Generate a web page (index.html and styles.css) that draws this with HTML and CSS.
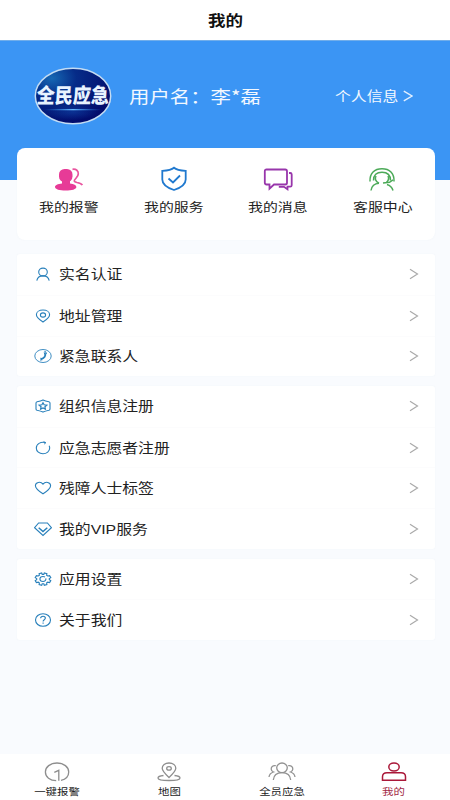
FILE: index.html
```html
<!DOCTYPE html>
<html lang="zh-CN">
<head>
<meta charset="utf-8">
<title>我的</title>
<link rel="stylesheet" href="styles.css">
</head>
<body>
<header class="titlebar"><span class="wide">我的</span></header>
<section class="profile">
  <div class="user">
    <div class="logo">
      <svg class="logo-bg" width="78" height="58" viewBox="0 0 78 58">
        <defs>
          <radialGradient id="navy" cx="22%" cy="18%" r="85%"><stop offset="0" stop-color="#1668b4"/><stop offset=".38" stop-color="#062c88"/><stop offset="1" stop-color="#020c6c"/></radialGradient>
          <linearGradient id="beam"><stop offset="0" stop-color="#2b86e8" stop-opacity="0"/><stop offset=".5" stop-color="#66b8ff"/><stop offset="1" stop-color="#2b86e8" stop-opacity="0"/></linearGradient>
          <radialGradient id="glow"><stop offset="0" stop-color="#1c70d8"/><stop offset="1" stop-color="#1c70d8" stop-opacity="0"/></radialGradient>
        </defs>
        <ellipse cx="39" cy="29" rx="37.700" ry="27.800" fill="url(#navy)" stroke="#c3dcf3" stroke-width="1.500"/>
        <ellipse cx="39" cy="45" rx="26" ry="8" fill="url(#glow)" opacity=".3"/>
        <rect x="10" y="42" width="58" height="1.300" fill="url(#beam)"/>
      </svg>
      <span class="logo-text">全民应急</span>
    </div>
    <span class="name">用户名：李*磊</span>
    <span class="info">个人信息</span>
    <svg class="info-arrow" width="10" height="12" viewBox="0 0 10 12"><path d="M.8 1.2 9 6 .8 10.8"/></svg>
  </div>
</section>
<main>
  <nav class="card quick">
    <a><svg width="30" height="26" viewBox="0 0 30 26"><g fill="#e73b97"><rect x="5" y="3" width="13.500" height="13" rx="5.500"/><path d="M8 11h8v6.500c4 .3 6.400 1.600 6.400 3.400 0 2.200-4.500 3.600-10.700 3.600S1 23.100 1 20.900c0-1.800 2.700-3.300 7-3.500Z"/></g><path d="M18.500 3.300c3.700-.5 6 1.400 5.800 4.600-.1 3-2.700 4.300-3.800 6.300-.7 1.300.3 1.800 2.500 2.300 2.700.5 4.600 1.200 5.300 2.700" stroke="#e9559f" stroke-width="1.700"/></svg><span class="wide">我的报警</span></a>
    <a><svg width="30" height="26" viewBox="0 0 30 26"><g stroke="#2079cf" stroke-width="1.800"><path d="M15 1.700C12 4.300 8.500 4.500 3.300 4.800v8.700c0 5.500 5 8.300 11.700 10.500 6.700-2.200 11.700-5 11.700-10.500V4.800C21.500 4.500 18 4.300 15 1.700Z"/><path d="m9.500 12.500 4.500 4 7-7"/></g></svg><span class="wide">我的服务</span></a>
    <a><svg width="30" height="26" viewBox="0 0 30 26"><g stroke="#9836ab" stroke-width="1.800"><path d="M3.500 3.500h18.700c1.300 0 1.800.7 1.800 1.700v11.600c0 1-.6 1.700-1.800 1.700H11l-4.500 4.200v-4.200h-3c-1 0-1.700-.7-1.700-1.700V5.200c0-1 .7-1.700 1.700-1.700Z"/><path d="M26 7h1.200c.9 0 1.500.6 1.500 1.500v10.700c0 1-.6 1.500-1.500 1.500h-2.700v2.500l-3.500-2.400h-5.200"/></g></svg><span class="wide">我的消息</span></a>
    <a><svg width="30" height="26" viewBox="0 0 30 26"><g stroke="#4caa58" stroke-width="1.500"><path d="M3 15.500C2.600 7.200 7.500 2.800 15 2.800S27.400 7.200 27 15.500M6.500 14.500C6.500 9 9.500 6.200 15 6.200s8.500 2.800 8.500 8.300"/><path d="M12 17.200c-3.400-1.800-4.300-4.700-3-7.200M21 10c1.100 2.200.6 4.500-1.500 6.300M16 17l6.500-.7 3.500-2.500M4 24.500c.7-4.500 3.900-6.900 8-7.200M20 18.500c3.200 1 5.200 3.200 6 6"/></g></svg><span class="wide">客服中心</span></a>
  </nav>

  <div class="card list">
    <a class="row"><svg class="icon" width="18" height="16" viewBox="0 0 18 16"><ellipse cx="9" cy="6" rx="4.300" ry="3.900"/><path d="M2.800 14.600c.6-3.200 2.800-4.700 6.200-4.700s5.600 1.500 6.200 4.700"/></svg><span class="wide">实名认证</span><svg class="arrow" width="10" height="12" viewBox="0 0 10 12"><path d="M1 1.200 8.500 6 1 10.800"/></svg></a>
    <a class="row"><svg class="icon" width="18" height="16" viewBox="0 0 18 16"><path d="M9 14C5 11.400 2.400 9.200 2.400 6.700 2.400 4 5.200 2 9 2s6.600 2 6.600 4.700C15.600 9.200 13 11.400 9 14Z"/><ellipse cx="9" cy="7" rx="2.600" ry="2.100"/></svg><span class="wide">地址管理</span><svg class="arrow" width="10" height="12" viewBox="0 0 10 12"><path d="M1 1.200 8.500 6 1 10.800"/></svg></a>
    <a class="row"><svg class="icon" width="18" height="16" viewBox="0 0 18 16"><ellipse cx="9" cy="8" rx="8.200" ry="6.500" stroke-width=".9"/><path d="M10.600 4.800c1.700 2.700 0 5.700-4 6.400" stroke-width="1.700"/><path d="m9.800 4.200 1.800-.6.900 2.200-1.700.6M6.500 10.200l1.700 1.500-2 .5" stroke-width="1"/></svg><span class="wide">紧急联系人</span><svg class="arrow" width="10" height="12" viewBox="0 0 10 12"><path d="M1 1.200 8.500 6 1 10.800"/></svg></a>
  </div>

  <div class="card list">
    <a class="row"><svg class="icon" width="18" height="16" viewBox="0 0 18 16"><path d="M9 1.900c2 1 4 1.500 5.900 1.900.8.200 1.100.6 1.100 1.300v5.800c0 .7-.3 1.100-1.100 1.300-1.900.4-3.900.9-5.900 1.900-2-1-4-1.500-5.900-1.900-.8-.2-1.100-.6-1.100-1.300V5.100c0-.7.3-1.100 1.100-1.300C5 3.400 7 2.900 9 1.900Z"/><path d="m9 4.800 1.100 2 2.700.3-1.900 1.600.5 2.400L9 10l-2.400 1.100.5-2.400-1.900-1.600 2.700-.3Z" stroke-width="1.200"/></svg><span class="wide">组织信息注册</span><svg class="arrow" width="10" height="12" viewBox="0 0 10 12"><path d="M1 1.200 8.500 6 1 10.800"/></svg></a>
    <a class="row"><svg class="icon" width="18" height="16" viewBox="0 0 18 16"><path d="M11.500 2.600C6.500 1.500 2.300 4 2.300 8c0 3.400 3 5.800 6.700 5.800s6.700-2.500 6.700-5.800c0-.8-.2-1.600-.6-2.300"/><path d="m9.500 1.600 2.500 1.100-2 1.500" stroke-width=".8"/></svg><span class="wide">应急志愿者注册</span><svg class="arrow" width="10" height="12" viewBox="0 0 10 12"><path d="M1 1.200 8.500 6 1 10.800"/></svg></a>
    <a class="row"><svg class="icon" width="18" height="16" viewBox="0 0 18 16"><path d="M9 13.800C5.300 11.400 1.400 8.900 1.400 5.700 1.400 2.200 6.500 1 9 4.100 11.500 1 16.600 2.200 16.600 5.700c0 3.200-3.900 5.700-7.600 8.100Z"/></svg><span class="wide">残障人士标签</span><svg class="arrow" width="10" height="12" viewBox="0 0 10 12"><path d="M1 1.200 8.500 6 1 10.800"/></svg></a>
    <a class="row"><svg class="icon" width="18" height="16" viewBox="0 0 18 16"><path d="M4.600 2h8.800l4 4.700L9 14.400.6 6.700Z"/><path d="m4.700 6.800 4.300 3.700 4.300-3.700" stroke-width="1.500"/></svg><span class="wide">我的<span class="latin">VIP</span>服务</span><svg class="arrow" width="10" height="12" viewBox="0 0 10 12"><path d="M1 1.200 8.500 6 1 10.800"/></svg></a>
  </div>

  <div class="card list">
    <a class="row"><svg class="icon" width="18" height="16" viewBox="0 0 18 16"><path d="m7.700 1.900.5 1.500h1.600l.5-1.500 2.600.8-.3 1.500 1.100.8 1.900-.4 1.200 2-1.500 1v1l1.500 1-1.200 2-1.900-.4-1.100.8.300 1.500-2.600.8-.5-1.500H8.200l-.5 1.500-2.600-.8.300-1.500-1.100-.8-1.900.4-1.200-2 1.500-1v-1l-1.500-1 1.200-2 1.900.4 1.100-.8-.3-1.500Z"/><path d="M11.800 7.300c.5 2-1 3.200-2.800 3.200s-3.100-1-3.100-2.500S7.200 5.500 9 5.500c.8 0 1.500.2 2 .5"/></svg><span class="wide">应用设置</span><svg class="arrow" width="10" height="12" viewBox="0 0 10 12"><path d="M1 1.200 8.500 6 1 10.800"/></svg></a>
    <a class="row"><svg class="icon" width="18" height="16" viewBox="0 0 18 16"><ellipse cx="9" cy="8" rx="7.500" ry="6.300"/><path d="M6.600 6.300C6.700 3.700 11.400 3.700 11.400 6.100c0 1.500-2.300 1.700-2.300 3.300M9.100 10.500v1.200"/></svg><span class="wide">关于我们</span><svg class="arrow" width="10" height="12" viewBox="0 0 10 12"><path d="M1 1.200 8.500 6 1 10.800"/></svg></a>
  </div>
</main>
<nav class="tabs">
  <a><svg width="28" height="22" viewBox="0 0 28 22"><g stroke="#8e8e8e" stroke-width="1.300"><path d="M13.200 19.700C7 19.700 2.400 16 2.400 11S7.200 2 14 2s11.700 4 11.700 9c0 4-3 7.300-7.700 8.400"/><path d="m11.300 11.300 4.500-2v10.500"/></g></svg><span class="wide">一键报警</span></a>
  <a><svg width="28" height="22" viewBox="0 0 28 22"><g stroke="#8e8e8e" stroke-width="1.300"><path d="M14 16.500C10 12.800 7.200 10.200 7.200 7.300 7.200 4.200 10 2 14 2s6.800 2.200 6.800 5.300c0 2.900-2.800 5.500-6.800 9.200Z"/><ellipse cx="14" cy="7.400" rx="2.300" ry="1.800"/><path d="M8.500 14.500c-3.500.4-5.500 1.300-5.500 2.400 0 1.600 4.900 2.600 11 2.600s11-1 11-2.600c0-1.100-2-2-5.500-2.400"/></g></svg><span class="wide">地图</span></a>
  <a><svg width="28" height="22" viewBox="0 0 28 22"><g stroke="#929292" stroke-width="1.300"><ellipse cx="14" cy="6.800" rx="5.300" ry="4.800"/><path d="M5.300 19c.4-4.800 3.700-7.400 8.700-7.400s8.300 2.600 8.700 7.400M7.800 4.700C4.600 4.200 3 6 3.200 8.200c.1 1.300 1 2.300 2.300 2.800C3 11.800 1.300 13.300 1 16M20.200 4.700c3.200-.5 4.800 1.300 4.600 3.500-.1 1.300-1 2.300-2.300 2.800 2.500.8 4.200 2.300 4.500 5"/></g></svg><span class="wide">全员应急</span></a>
  <a class="active"><svg width="28" height="22" viewBox="0 0 28 22"><g stroke="#aa1839" stroke-width="1.500"><ellipse cx="14" cy="6" rx="5.200" ry="4"/><path d="M2.500 19.300v-3.500c0-2.500 1.500-4 4.500-4h14c3 0 4.500 1.500 4.500 4v3.500Z"/></g></svg><span class="wide">我的</span></a>
</nav>
</body>
</html>
```
FILE: styles.css
```css
* { box-sizing: border-box; }

body {
  margin: 0;
  width: 450px;
  height: 800px;
  overflow: hidden;
  display: flex;
  flex-direction: column;
  background: #f9fbfe;
  color: #222;
  font-family: "Noto Sans CJK SC", sans-serif;
}

svg { display: block; fill: none; flex: none; }

.wide { display: inline-block; white-space: nowrap; transform: scaleX(1.2); }

.titlebar {
  height: 40px;
  flex: none;
  display: flex;
  align-items: center;
  justify-content: center;
  padding: 0 0 2px 2px;
  background: #fff;
  color: #111;
  font-size: 14.6px;
  font-weight: 700;
}

.profile {
  height: 140px;
  flex: none;
  background: #3b95f4;
  border-top: 1px solid #71aeea;
  color: #f2f8ff;
}

.user { display: flex; align-items: center; height: 110px; padding-left: 34px; }

.logo { display: grid; width: 78px; height: 58px; place-items: center; }
.logo-bg, .logo-text { grid-area: 1 / 1; }
.logo-text {
  color: #e8f3ff;
  font-size: 18.5px;
  font-weight: 900;
  line-height: 1;
  white-space: nowrap;
  transform: translateY(-2px) scale(.98, 1.12) skewX(-4deg);
}

.name, .info {
  white-space: nowrap;
  transform: scaleX(1.2);
  transform-origin: left center;
  margin-top: -2px;
}
.name { width: 120px; margin-left: 17px; margin-right: 86px; font-size: 17px; }
.info { width: 54px; margin-right: 13.5px; font-size: 13.2px; }
.info-arrow { stroke: #e3f0ff; stroke-width: 1.4; }

main {
  flex: 1;
  display: flex;
  flex-direction: column;
  gap: 9.5px;
  margin-top: -32px;
  padding: 0 15.5px 0 17px;
}

.card { background: #fff; border-radius: 3px; box-shadow: 0 0 2px rgba(100, 130, 160, .06); }

.quick {
  height: 92px;
  margin-bottom: 4.5px;
  display: grid;
  grid-template-columns: repeat(4, 1fr);
  border-radius: 8px;
  font-size: 12.4px;
}
.quick a { display: flex; flex-direction: column; align-items: center; padding-top: 18px; }
.quick .wide { line-height: 20px; margin-top: 5px; }

.row { display: flex; align-items: center; height: 40.8px; padding: 0 16px 0 17px; font-size: 13.2px; }
.row + .row { border-top: 1px solid #fcfcfd; }
.row .wide { margin: -1px auto 0 7px; transform-origin: left center; }
.latin { font-family: "Liberation Sans", sans-serif; font-size: 13.2px; line-height: 1; }
.icon { stroke: #2980bb; stroke-width: 1.1; }
.arrow { stroke: #aaa; stroke-width: 1.2; }

.tabs {
  height: 46px;
  flex: none;
  display: grid;
  grid-template-columns: repeat(4, 1fr);
  padding-left: 1px;
  background: #fff;
  font-size: 9.5px;
}
.tabs a { display: flex; flex-direction: column; align-items: center; padding-top: 7px; }
.tabs .wide { line-height: 14px; margin-top: 1px; }
.tabs .active { color: #a32a46; }
```
